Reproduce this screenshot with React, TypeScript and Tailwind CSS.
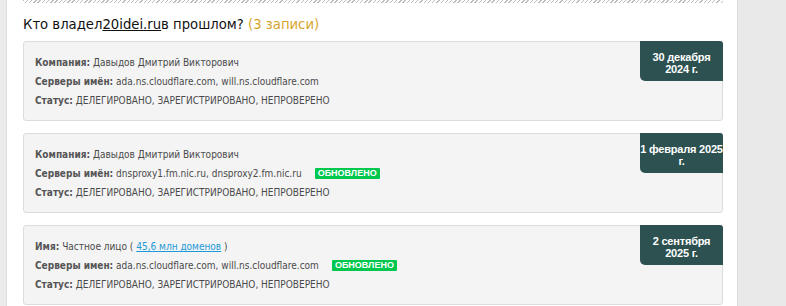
import React from "react";

type Row = { label: string; value: React.ReactNode; fresh?: boolean };

type Record = { date: [string, string]; rows: Row[] };

const records: Record[] = [
  {
    date: ["30 декабря", "2024 г."],
    rows: [
      { label: "Компания:", value: "Давыдов Дмитрий Викторович" },
      { label: "Серверы имён:", value: "ada.ns.cloudflare.com, will.ns.cloudflare.com" },
      { label: "Статус:", value: "ДЕЛЕГИРОВАНО, ЗАРЕГИСТРИРОВАНО, НЕПРОВЕРЕНО" },
    ],
  },
  {
    date: ["1 февраля 2025", "г."],
    rows: [
      { label: "Компания:", value: "Давыдов Дмитрий Викторович" },
      { label: "Серверы имён:", value: "dnsproxy1.fm.nic.ru, dnsproxy2.fm.nic.ru", fresh: true },
      { label: "Статус:", value: "ДЕЛЕГИРОВАНО, ЗАРЕГИСТРИРОВАНО, НЕПРОВЕРЕНО" },
    ],
  },
  {
    date: ["2 сентября", "2025 г."],
    rows: [
      {
        label: "Имя:",
        value: (
          <>
            Частное лицо ({" "}
            <a href="#" className="text-[#1a9ad6] underline">
              45,6 млн доменов
            </a>{" "}
            )
          </>
        ),
      },
      { label: "Серверы имен:", value: "ada.ns.cloudflare.com, will.ns.cloudflare.com", fresh: true },
      { label: "Статус:", value: "ДЕЛЕГИРОВАНО, ЗАРЕГИСТРИРОВАНО, НЕПРОВЕРЕНО" },
    ],
  },
];

function FreshBadge() {
  return (
    <span className="ml-[13px] inline-flex h-[11px] items-center rounded-[1px] bg-[#00c84f] px-[3px] font-['Liberation_Sans_Narrow','Liberation_Sans',sans-serif] text-[9px] font-bold leading-none text-white">
      ОБНОВЛЕНО
    </span>
  );
}

function RecordCard({ rec }: { rec: Record }) {
  return (
    <div className="relative rounded-[3px] border border-[#dcdcdc] bg-[#f4f4f4] pl-[11px] pt-[11px] pb-[10px]">
      {/* date tag */}
      <div className="absolute -top-px -right-px flex h-[40px] w-[83px] flex-col items-center rounded-bl-[5px] rounded-tr-[3px] bg-[#2d5150] pt-[10px] font-['Liberation_Sans',Arial,sans-serif] text-[11px] font-bold leading-[12px] tracking-[-0.2px] text-white">
        <span className="whitespace-nowrap">{rec.date[0]}</span>
        <span className="whitespace-nowrap">{rec.date[1]}</span>
      </div>
      {rec.rows.map((r, i) => (
        <div key={i} className="flex h-[19px] items-center text-[10px] text-[#4a4a4a]">
          <span>
            <b className="text-[#555]">{r.label}</b> {r.value}
          </span>
          {r.fresh && <FreshBadge />}
        </div>
      ))}
    </div>
  );
}

export default function App() {
  return (
    <div className="flex h-[306px] w-[786px] overflow-hidden bg-white font-['DejaVu_Sans_Condensed','DejaVu_Sans',Tahoma,sans-serif]">
      <div className="w-[7px] shrink-0 border-r border-[#dedede] bg-[#ebebeb]" />
      <div className="flex-1 pl-[16px] pr-[14px]">
        <div className="h-[3px] bg-[repeating-linear-gradient(135deg,#bdbdbd_0_1px,transparent_1px_3px)]" />
        <h1 className="mt-[13px] mb-[9px] text-[14.7px] leading-[16px] text-[#111]">
          Кто владел<span className="underline">20idei.ru</span>в прошлом?{" "}
          <span className="text-[#d6a32c]">(3 записи)</span>
        </h1>
        <div className="flex flex-col gap-[12px]">
          {records.map((rec, i) => (
            <RecordCard key={i} rec={rec} />
          ))}
        </div>
      </div>
      <div className="w-[49px] shrink-0 border-l border-[#dcdcdc] bg-[#e9e9e9]" />
    </div>
  );
}
